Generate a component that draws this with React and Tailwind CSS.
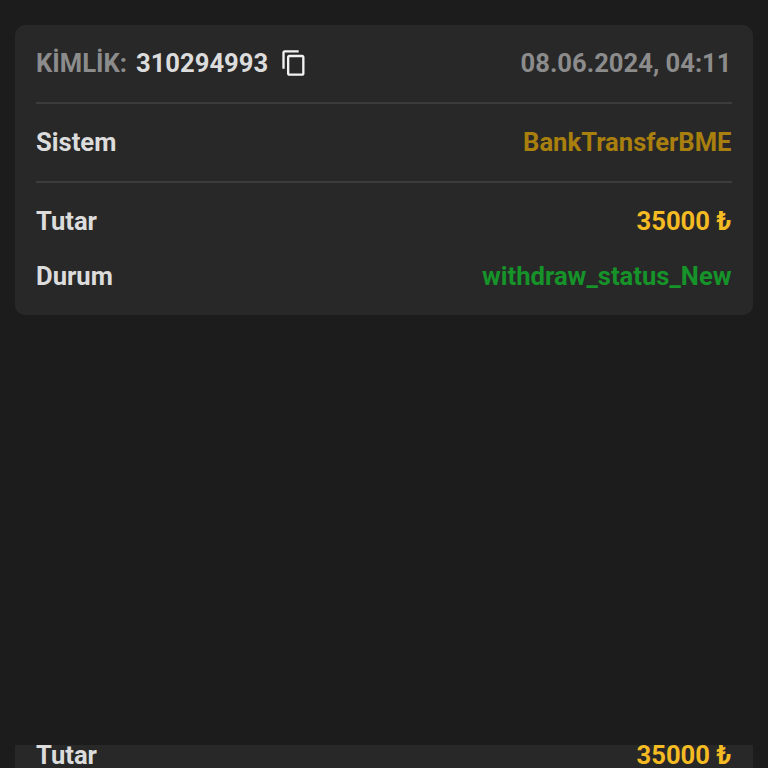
import React from "react";

function CopyIcon() {
  return (
    <svg width="28" height="28" viewBox="0 0 24 24" fill="currentColor" className="text-[#f2f2f2]">
      <path d="M16 1H4c-1.1 0-2 .9-2 2v14h2V3h12V1zm3 4H8c-1.1 0-2 .9-2 2v14c0 1.100.9 2 2 2h11c1.100 0 2-.9 2-2V7c0-1.100-.9-2-2-2zm0 16H8V7h11v14z" />
    </svg>
  );
}

function Row({ label, value, valueClass, className = "" }) {
  return (
    <div className={`flex items-center justify-between ${className}`}>
      <span className="text-[#dcdcdc]">{label}</span>
      <span className={valueClass}>{value}</span>
    </div>
  );
}

export default function App() {
  return (
    <div className="h-[768px] overflow-hidden bg-[#1c1c1c] px-[15px] pt-[25px] font-['Roboto',sans-serif] text-[25.6px] font-bold leading-[24px]">
      <div className="h-[290px] rounded-[10px] bg-[#282828] pl-[21px] pr-[21.5px]">
        <div className="flex h-[79px] items-center justify-between border-b-2 border-[#3c3c3c] pb-[2px]">
          <div className="flex items-center">
            <span className="text-[#8c8c8c]">KİMLİK:</span>
            <span className="ml-[9px] text-[#dcdcdc]">310294993</span>
            <span className="ml-[12px] flex"><CopyIcon /></span>
          </div>
          <span className="text-[#8c8c8c]">08.06.2024, 04:11</span>
        </div>
        <Row label="Sistem" value="BankTransferBME" valueClass="text-[#a97f0e]" className="h-[79px] border-b-2 border-[#3c3c3c] pb-[2px]" />
        <Row label="Tutar" value="35000 ₺" valueClass="text-[#f5bb22]" className="h-[76px]" />
        <Row label="Durum" value="withdraw_status_New" valueClass="text-[#169329]" className="h-[34px]" />
      </div>
      <div className="mt-[430px] flex h-[60px] flex-col bg-[#282828] pl-[21px] pr-[21.5px]">
        <Row label="Tutar" value="35000 ₺" valueClass="text-[#f5bb22]" className="-mt-[2px] h-[24px]" />
      </div>
    </div>
  );
}
